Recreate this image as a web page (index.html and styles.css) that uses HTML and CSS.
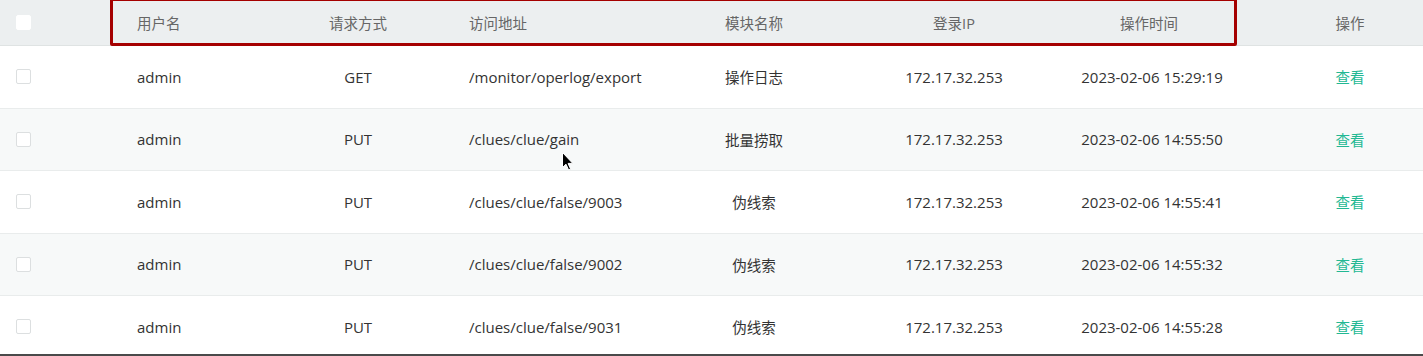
FILE: index.html
```html
<!DOCTYPE html>
<html lang="zh-CN">
<head>
<meta charset="utf-8">
<title>操作日志</title>
<link rel="stylesheet" href="styles.css">
</head>
<body>
<div class="frame">
  <div class="table">
    <div class="row head">
      <div class="cell c-check"><span class="box head-box"></span></div>
      <div class="cell c-user zh">用户名</div>
      <div class="cell c-method zh">请求方式</div>
      <div class="cell c-url zh">访问地址</div>
      <div class="cell c-module zh">模块名称</div>
      <div class="cell c-ip zh">登录IP</div>
      <div class="cell c-time zh">操作时间</div>
      <div class="cell c-op zh">操作</div>
    </div>
    <div class="row">
      <div class="cell c-check"><span class="box"></span></div>
      <div class="cell c-user">admin</div>
      <div class="cell c-method">GET</div>
      <div class="cell c-url">/monitor/operlog/export</div>
      <div class="cell c-module zh">操作日志</div>
      <div class="cell c-ip">172.17.32.253</div>
      <div class="cell c-time">2023-02-06 15:29:19</div>
      <div class="cell c-op zh"><a class="link">查看</a></div>
    </div>
    <div class="row stripe">
      <div class="cell c-check"><span class="box"></span></div>
      <div class="cell c-user">admin</div>
      <div class="cell c-method">PUT</div>
      <div class="cell c-url">/clues/clue/gain</div>
      <div class="cell c-module zh">批量捞取</div>
      <div class="cell c-ip">172.17.32.253</div>
      <div class="cell c-time">2023-02-06 14:55:50</div>
      <div class="cell c-op zh"><a class="link">查看</a></div>
    </div>
    <div class="row">
      <div class="cell c-check"><span class="box"></span></div>
      <div class="cell c-user">admin</div>
      <div class="cell c-method">PUT</div>
      <div class="cell c-url">/clues/clue/false/9003</div>
      <div class="cell c-module zh">伪线索</div>
      <div class="cell c-ip">172.17.32.253</div>
      <div class="cell c-time">2023-02-06 14:55:41</div>
      <div class="cell c-op zh"><a class="link">查看</a></div>
    </div>
    <div class="row stripe">
      <div class="cell c-check"><span class="box"></span></div>
      <div class="cell c-user">admin</div>
      <div class="cell c-method">PUT</div>
      <div class="cell c-url">/clues/clue/false/9002</div>
      <div class="cell c-module zh">伪线索</div>
      <div class="cell c-ip">172.17.32.253</div>
      <div class="cell c-time">2023-02-06 14:55:32</div>
      <div class="cell c-op zh"><a class="link">查看</a></div>
    </div>
    <div class="row">
      <div class="cell c-check"><span class="box"></span></div>
      <div class="cell c-user">admin</div>
      <div class="cell c-method">PUT</div>
      <div class="cell c-url">/clues/clue/false/9031</div>
      <div class="cell c-module zh">伪线索</div>
      <div class="cell c-ip">172.17.32.253</div>
      <div class="cell c-time">2023-02-06 14:55:28</div>
      <div class="cell c-op zh"><a class="link">查看</a></div>
    </div>
  </div>
  <div class="highlight"></div>
  <svg class="cursor" width="12" height="19" viewBox="0 0 12 19">
    <path d="M0.5 0.5 L0.5 15.5 L4 12.2 L6.6 18 L8.6 17.1 L6.1 11.4 L10.8 11.4 Z" fill="#000" stroke="#fff" stroke-width="1"/>
  </svg>
</div>
</body>
</html>
```

FILE: styles.css
```css
html, body {
  margin: 0;
  padding: 0;
  background: #fff;
}

body {
  font-family: "Open Sans", "Noto Sans CJK SC", sans-serif;
  font-size: 15px;
  color: #333;
}

.frame {
  position: relative;
  width: 1423px;
  height: 356px;
  overflow: hidden;
  box-sizing: border-box;
  border-bottom: 2px solid #4a4a4a;
}

.table {
  display: flex;
  flex-direction: column;
}

.row {
  display: grid;
  grid-template-columns: 110px 153px 190px 207px 188px 212px 176px 187px;
  height: 62.5px;
  align-items: center;
  border-bottom: 1px solid #e9ecec;
  box-sizing: border-box;
}

.row.head {
  height: 46px;
  background: #eceff0;
  color: #666;
  border-bottom: 1px solid #dfe3e3;
}

.row.stripe {
  background: #f7f9f9;
}

.cell {
  white-space: nowrap;
}

.zh {
  font-size: 14.5px;
}

.c-check {
  padding-left: 16px;
  display: flex;
  align-items: center;
}

.c-user {
  padding-left: 27px;
}

.c-url {
  padding-left: 16px;
}

.c-method,
.c-module,
.c-ip {
  text-align: center;
}

.c-time {
  text-align: center;
  padding-left: 8px;
}

.row.head .c-time {
  padding-left: 2px;
}

.c-op {
  text-align: center;
  padding-left: 41px;
}

.box {
  display: inline-block;
  width: 15px;
  height: 15px;
  box-sizing: border-box;
  border: 1px solid #dcdfe0;
  border-radius: 2px;
  background: #fff;
}

.head-box {
  border-color: #fff;
}

.link {
  color: #22b893;
  cursor: pointer;
}

.highlight {
  position: absolute;
  left: 110px;
  top: -2px;
  width: 1127px;
  height: 48px;
  box-sizing: border-box;
  border: 3px solid #a50000;
  border-radius: 2px;
}

.cursor {
  position: absolute;
  left: 562px;
  top: 152px;
}
```
